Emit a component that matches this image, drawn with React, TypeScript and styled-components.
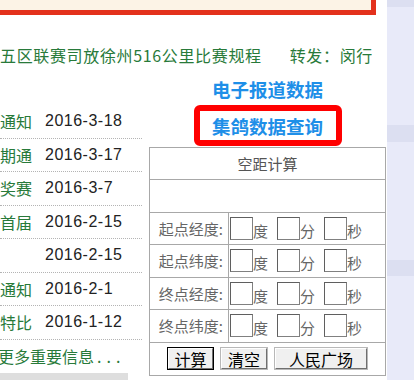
import styled, { createGlobalStyle } from "styled-components";

const GlobalStyle = createGlobalStyle`
    html, body {
        margin: 0;
        padding: 0;
        background: #ffffff;
        overflow: hidden;
    }
    body {
        font-family: "Noto Sans CJK SC", "Noto Sans", sans-serif;
    }
`

const Page = styled.div`
    display: flex;
    width: 414px;
    height: 380px;
    overflow: hidden;
`

const Main = styled.div`
    width: 387px;
    flex-shrink: 0;
    background-color: #ffffff;
`

const Side = styled.div`
    flex: 1;
    background: linear-gradient(
        to bottom,
        #dcdff1 0, #dcdff1 7px,
        #e8eaf9 7px, #e8eaf9 125px,
        #dcdff1 125px, #dcdff1 142px,
        #e8eaf9 142px, #e8eaf9 260px,
        #dcdff1 260px, #dcdff1 276px,
        #e8eaf9 276px
    );
`

const Banner = styled.div`
    width: 371px;
    height: 10px;
    background-color: #fcf3e6;
    border-right: 5px solid #e3311c;
    border-bottom: 5px solid #e3311c;
`

const Headline = styled.div`
    width: 372px;
    margin-top: 30px;
    height: 20px;
    line-height: 20px;
    font-size: 16px;
    letter-spacing: 0.65px;
    color: #287a3a;
    white-space: nowrap;
    overflow: hidden;
`

const Repost = styled.span`
    margin-left: 28px;
`

const Columns = styled.div`
    display: flex;
    gap: 7px;
    margin-top: 5px;
`

const NewsList = styled.ul`
    list-style: none;
    margin: 0;
    padding: 35px 0 0;
    width: 142px;
`

const NewsItem = styled.li`
    display: flex;
    align-items: center;
    height: 33.5px;
    box-sizing: border-box;
    border-bottom: 1px dotted #b4b4b4;
    font-size: 16px;
`

const NewsTitle = styled.span`
    width: 32px;
    margin-right: 13px;
    color: #287a3a;
    white-space: nowrap;
    overflow: hidden;
`

const NewsDate = styled.span`
    font-family: "Liberation Sans", Arial, sans-serif;
    letter-spacing: 0.5px;
    color: #222;
`

const MoreItem = styled.li`
    height: 33.5px;
    line-height: 33px;
    margin-left: -2px;
    font-size: 16px;
    color: #287a3a;
    white-space: nowrap;

    span {
        margin-left: 3px;
        letter-spacing: 5px;
    }
`

const GrayBar = styled.div`
    width: 128px;
    height: 8px;
    background-color: #dedede;
`

const Aside = styled.div`
    width: 237px;
    display: flex;
    flex-direction: column;
    align-items: center;
`

const ReportLink = styled.a`
    margin-top: 6px;
    line-height: 26px;
    font-size: 18.5px;
    font-weight: bold;
    color: #1e8fe8;
    text-decoration: none;
`

const Highlight = styled.div`
    margin-top: 3px;
    width: 148px;
    height: 41px;
    box-sizing: border-box;
    border: 6px solid #ff0000;
    border-radius: 6px;
    display: flex;
    align-items: center;
    justify-content: center;
    background-color: #ffffff;
`

const HighlightText = styled.span`
    line-height: 26px;
    font-size: 18.5px;
    font-weight: bold;
    color: #1e8fe8;
`

const Calc = styled.div`
    width: 237px;
    margin-top: 1px;
    box-sizing: border-box;
    border: 1px solid #a8a8a8;
    font-size: 15px;
    color: #666;
`

const CalcRow = styled.div<{ $h?: number }>`
    display: flex;
    align-items: center;
    justify-content: center;
    height: ${(p) => p.$h ?? 32.5}px;
    box-sizing: border-box;
    border-bottom: 1px solid #a8a8a8;

    &:last-child {
        border-bottom: none;
    }
`

const CalcTitle = styled(CalcRow)`
    color: #555;
`

const CoordRow = styled(CalcRow)`
    justify-content: flex-start;
    align-items: stretch;
`

const CoordLabel = styled.div`
    width: 79px;
    box-sizing: border-box;
    border-right: 1px solid #a8a8a8;
    padding-right: 5px;
    display: flex;
    align-items: center;
    justify-content: flex-end;
    white-space: nowrap;
`

const CoordFields = styled.div`
    display: flex;
    align-items: center;
    padding-left: 1px;
`

const NumInput = styled.input`
    width: 23px;
    height: 23px;
    box-sizing: border-box;
    padding: 0;
    margin: 0;
    border: 1px solid #808080;
    border-top-color: #5f5f5f;
    border-left-color: #5f5f5f;
    background: #fff;
`

const Unit = styled.span`
    width: 15px;
    margin-right: 9px;
    padding-top: 5px;
    line-height: 16px;
    color: #666;

    &:last-child {
        margin-right: 0;
    }
`

const ButtonRow = styled(CalcRow)`
    gap: 8px;
`

const CalcButton = styled.button<{ $w: number; $primary?: boolean }>`
    width: ${(p) => p.$w}px;
    height: 21px;
    padding: 0;
    box-sizing: border-box;
    font-family: "Noto Sans CJK SC", sans-serif;
    font-size: 16px;
    line-height: 1;
    color: #000;
    background-color: #f0f0f0;
    border: 1px solid;
    border-color: #ffffff #6f6f6f #6f6f6f #ffffff;
    box-shadow: ${(p) => (p.$primary ? "0 0 0 1px #000" : "0 0 0 1px #b8b8b8")};
`

const news = [
    { title: "通知", date: "2016-3-18" },
    { title: "期通", date: "2016-3-17" },
    { title: "奖赛", date: "2016-3-7" },
    { title: "首届", date: "2016-2-15" },
    { title: "", date: "2016-2-15" },
    { title: "通知", date: "2016-2-1" },
    { title: "特比", date: "2016-1-12" },
];

const coords = ["起点经度", "起点纬度", "终点经度", "终点纬度"];

const App = () => {
    return (
        <>
            <GlobalStyle />
            <Page>
                <Main>
                    <Banner />
                    <Headline>
                        五区联赛司放徐州516公里比赛规程
                        <Repost>转发：闵行</Repost>
                    </Headline>
                    <Columns>
                        <div>
                            <NewsList>
                                {news.map((n, i) => (
                                    <NewsItem key={i}>
                                        <NewsTitle>{n.title}</NewsTitle>
                                        <NewsDate>{n.date}</NewsDate>
                                    </NewsItem>
                                ))}
                                <MoreItem>更多重要信息<span>...</span></MoreItem>
                            </NewsList>
                            <GrayBar />
                        </div>
                        <Aside>
                            <ReportLink href="#">电子报道数据</ReportLink>
                            <Highlight>
                                <HighlightText>集鸽数据查询</HighlightText>
                            </Highlight>
                            <Calc>
                                <CalcTitle $h={32}>空距计算</CalcTitle>
                                <CalcRow />
                                {coords.map((c) => (
                                    <CoordRow key={c}>
                                        <CoordLabel>{c}:</CoordLabel>
                                        <CoordFields>
                                            <NumInput />
                                            <Unit>度</Unit>
                                            <NumInput />
                                            <Unit>分</Unit>
                                            <NumInput />
                                            <Unit>秒</Unit>
                                        </CoordFields>
                                    </CoordRow>
                                ))}
                                <ButtonRow $h={32}>
                                    <CalcButton $w={45} $primary>计算</CalcButton>
                                    <CalcButton $w={46}>清空</CalcButton>
                                    <CalcButton $w={92}>人民广场</CalcButton>
                                </ButtonRow>
                            </Calc>
                        </Aside>
                    </Columns>
                </Main>
                <Side />
            </Page>
        </>
    )
}

export default App;
